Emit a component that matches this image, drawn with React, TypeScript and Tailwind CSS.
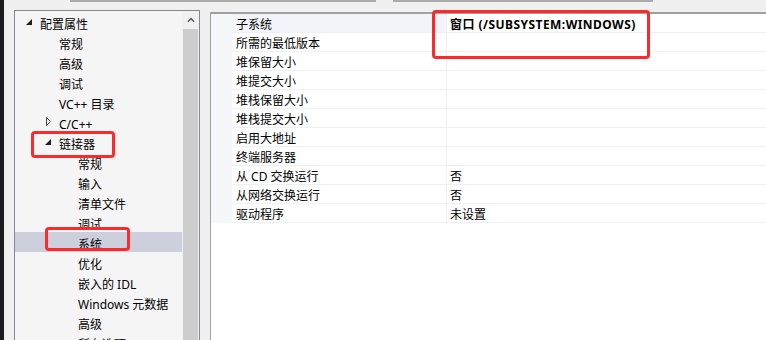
import React from 'react';

type TreeItem = {
  label: string;
  level: 0 | 1 | 2;
  arrow?: 'open' | 'closed';
  selected?: boolean;
};

const TREE: TreeItem[] = [
  { label: '配置属性', level: 0, arrow: 'open' },
  { label: '常规', level: 1 },
  { label: '高级', level: 1 },
  { label: '调试', level: 1 },
  { label: 'VC++ 目录', level: 1 },
  { label: 'C/C++', level: 1, arrow: 'closed' },
  { label: '链接器', level: 1, arrow: 'open' },
  { label: '常规', level: 2 },
  { label: '输入', level: 2 },
  { label: '清单文件', level: 2 },
  { label: '调试', level: 2 },
  { label: '系统', level: 2, selected: true },
  { label: '优化', level: 2 },
  { label: '嵌入的 IDL', level: 2 },
  { label: 'Windows 元数据', level: 2 },
  { label: '高级', level: 2 },
  { label: '所有选项', level: 2 },
];

const INDENT = ['pl-[11px]', 'pl-[30px]', 'pl-[49px]'];

const PROPS: { name: string; value?: string; bold?: boolean; active?: boolean }[] = [
  { name: '子系统', value: '窗口 (/SUBSYSTEM:WINDOWS)', bold: true, active: true },
  { name: '所需的最低版本' },
  { name: '堆保留大小' },
  { name: '堆提交大小' },
  { name: '堆栈保留大小' },
  { name: '堆栈提交大小' },
  { name: '启用大地址' },
  { name: '终端服务器' },
  { name: '从 CD 交换运行', value: '否' },
  { name: '从网络交换运行', value: '否' },
  { name: '驱动程序', value: '未设置' },
];

const FONT = "font-['Noto_Sans','Noto_Sans_CJK_SC',sans-serif]";
const MARK = 'absolute rounded-[4px] border-[3px] border-[#fb2b2b]';

function Arrow({ kind }: { kind?: 'open' | 'closed' }) {
  if (kind === 'open') {
    return (
      <svg width="14" height="20" viewBox="0 0 14 20" className="shrink-0">
        <polygon points="6,7 6,13 0,13" fill="#1e1e1e" />
      </svg>
    );
  }
  if (kind === 'closed') {
    return (
      <svg width="14" height="20" viewBox="0 0 14 20" className="shrink-0">
        <polygon points="1.5,5.5 5.5,9.5 1.5,13.5" fill="none" stroke="#444" strokeWidth="1" />
      </svg>
    );
  }
  return <span className="w-[14px] shrink-0" />;
}

export default function App() {
  return (
    <div className={`relative flex h-[340px] w-[766px] overflow-hidden bg-[#f0f0f0] text-[12px] text-black ${FONT}`}>
      <div className="w-[4px] shrink-0 bg-[#1c1c1c]" />

      <div className="flex flex-1 flex-col">
        <div className="flex h-[12px] pl-[66px]">
          <div className="h-[2px] w-[306px] bg-[#ababab]" />
          <div className="ml-[17px] h-[2px] w-[260px] bg-[#ababab]" />
        </div>

        <div className="flex flex-1 pl-[10px]">
          {/* tree */}
          <div className="flex h-[330px] w-[186px] shrink-0 border-l border-r border-t border-[#828790]">
            <div className="w-[167px] bg-[#f5f5f5] pt-[1px]">
              {TREE.map((item, i) => (
                <div
                  key={i}
                  className={`flex h-[20px] items-center whitespace-nowrap ${INDENT[item.level]} ${
                    item.selected ? 'bg-[#cdd0dc]' : ''
                  }`}
                >
                  <Arrow kind={item.arrow} />
                  <span className="pt-[5px] leading-[15px]">{item.label}</span>
                </div>
              ))}
            </div>
            <div className="flex w-[17px] flex-col bg-[#f0f0f0]">
              <div className="flex h-[18px] items-center justify-center">
                <svg width="8" height="6" viewBox="0 0 8 6">
                  <path d="M0.8 4.8 L4 1.6 L7.2 4.8" fill="none" stroke="#606060" strokeWidth="1.6" />
                </svg>
              </div>
              <div className="mx-[1px] flex-1 bg-[#cdcdcd]" />
            </div>
          </div>

          {/* property grid */}
          <div className="ml-[10px] mt-[2px] flex flex-1 flex-col border-l border-t-2 border-[#a0a0a0] bg-white">
            {PROPS.map((p, i) => (
              <div key={i} className="flex h-[19px]">
                <div className="w-[21px] shrink-0 bg-[#f5f7fb]" />
                <div
                  className={`flex w-[214px] shrink-0 items-center border-b border-[#eef0f6] pl-[4px] pt-[3px] ${
                    p.active ? 'bg-[#f2f4f9]' : ''
                  }`}
                >
                  {p.name}
                </div>
                <div
                  className={`flex flex-1 items-center border-b border-l border-[#eef0f6] pl-[3px] pt-[3px] ${
                    p.bold ? 'font-bold tracking-[0.45px]' : ''
                  }`}
                >
                  {p.value ?? ''}
                </div>
              </div>
            ))}
          </div>
        </div>
      </div>

      {/* annotation marks */}
      <div className={`${MARK} left-[31px] top-[131px] h-[27px] w-[84px]`} />
      <div className={`${MARK} left-[45px] top-[227px] h-[24px] w-[85px]`} />
      <div className={`${MARK} left-[432px] top-[10px] h-[49px] w-[218px]`} />
    </div>
  );
}
